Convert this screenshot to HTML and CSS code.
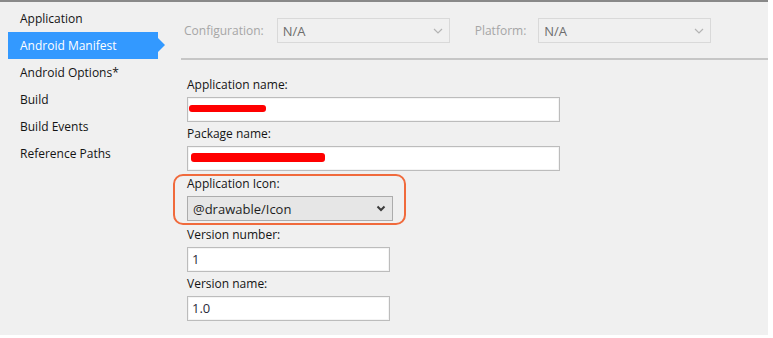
FILE: index.html
```html
<!DOCTYPE html>
<html lang="en">
<head>
    <meta charset="UTF-8">
    <title>Android Manifest</title>
    <link rel="stylesheet" href="styles.css">
</head>
<body>
    <div class="window">
        <!-- left navigation -->
        <ul class="nav">
            <li class="nav-item">Application</li>
            <li class="nav-item active">Android Manifest</li>
            <li class="nav-item">Android Options*</li>
            <li class="nav-item">Build</li>
            <li class="nav-item">Build Events</li>
            <li class="nav-item">Reference Paths</li>
        </ul>

        <div class="main">
            <!-- configuration bar -->
            <div class="toolbar">
                <span class="tool-label">Configuration:</span>
                <div class="combo disabled">
                    <span>N/A</span>
                    <svg class="chev" width="10" height="6" viewBox="0 0 10 6"><polyline points="1,1 5,5 9,1" fill="none" stroke="#b4b4b4" stroke-width="1.2"/></svg>
                </div>
                <span class="tool-label platform">Platform:</span>
                <div class="combo disabled">
                    <span>N/A</span>
                    <svg class="chev" width="10" height="6" viewBox="0 0 10 6"><polyline points="1,1 5,5 9,1" fill="none" stroke="#b4b4b4" stroke-width="1.2"/></svg>
                </div>
            </div>

            <!-- manifest form -->
            <div class="form">
                <div class="field">
                    <label>Application name:</label>
                    <div class="input wide"><span class="redact r1"></span></div>
                </div>
                <div class="field">
                    <label>Package name:</label>
                    <div class="input wide"><span class="redact r2"></span></div>
                </div>
                <div class="field highlight">
                    <label>Application Icon:</label>
                    <div class="combo icon-select">
                        <span>@drawable/Icon</span>
                        <svg class="chev" width="10" height="7" viewBox="0 0 10 7"><polyline points="1.5,1.5 5,5 8.5,1.5" fill="none" stroke="#3c3c3c" stroke-width="2"/></svg>
                    </div>
                </div>
                <div class="field">
                    <label>Version number:</label>
                    <div class="input short">1</div>
                </div>
                <div class="field">
                    <label>Version name:</label>
                    <div class="input short">1.0</div>
                </div>
            </div>
        </div>
    </div>
</body>
</html>
```

FILE: styles.css
```css
/* page */
body {
    margin: 0;
    background: #fff;
    font-family: "Segoe UI", "Open Sans", sans-serif;
    font-size: 12px;
    color: #141414;
}

.window {
    width: 768px;
    height: 333px;
    background: #f0f0f0;
    border-top: 2px solid #898989;
    display: flex;
}

/* navigation */
.nav {
    list-style: none;
    margin: 0;
    padding: 4px 0 0 8px;
    width: 173px;
    box-sizing: border-box;
}
.nav-item {
    height: 27px;
    line-height: 26px;
    padding-left: 12px;
    width: 150px;
    box-sizing: border-box;
}
.nav-item.active {
    position: relative;
    background: #3399ff;
    color: #fff;
    margin-top: -1px;
    margin-bottom: 1px;
    line-height: 28px;
}
.nav-item.active::after {
    content: "";
    position: absolute;
    right: -7px;
    top: 6px;
    border-left: 7px solid #3399ff;
    border-top: 7px solid transparent;
    border-bottom: 7px solid transparent;
}

/* main column */
.main {
    flex: 1;
    padding-left: 8px;
}

.toolbar {
    display: flex;
    align-items: center;
    padding: 16px 0 15px 3px;
    border-bottom: 2px solid #c6c6c6;
}
.tool-label {
    color: #a6a6a6;
    margin-right: 13px;
}
.tool-label.platform {
    margin-left: 25px;
    margin-right: 12px;
}

.combo {
    display: flex;
    align-items: center;
    justify-content: space-between;
    box-sizing: border-box;
    height: 25px;
    padding: 0 6px 0 5px;
    border: 1px solid #d9d9d9;
}
.combo.disabled {
    width: 173px;
    color: #6d6d6d;
    font-size: 13px;
}

/* form */
.form {
    padding: 17px 0 0 6px;
}
.field label {
    display: block;
    height: 16px;
    line-height: 16px;
    margin-bottom: 4px;
}
.field {
    margin-bottom: 4px;
}
.field.highlight {
    position: relative;
    margin: 5px 0 6px;
}
.field.highlight::after {
    content: "";
    position: absolute;
    left: -14px;
    top: -2px;
    width: 233px;
    height: 51px;
    box-sizing: border-box;
    border: 2px solid #f06a3c;
    border-radius: 10px;
}

.input {
    box-sizing: border-box;
    height: 25px;
    background: #fff;
    border: 1px solid #bcbcbc;
    box-shadow: inset 0 0 0 1px #f4f4f4;
    padding: 0 4px;
    line-height: 23px;
    font-size: 13px;
    color: #2a2a3a;
}
.input.wide { width: 373px; }
.input.short { width: 203px; }

.icon-select {
    width: 206px;
    background: #e6e6e6;
    border: 1px solid #acacac;
    font-size: 13px;
    color: #1e1e1e;
    padding-right: 6px;
}

/* redacted values */
.redact {
    display: inline-block;
    background: #ff0000;
    border-radius: 3px;
    vertical-align: top;
}
.redact.r1 {
    width: 77px;
    height: 7px;
    margin-top: 7px;
    margin-left: -3px;
}
.redact.r2 {
    width: 134px;
    height: 9px;
    margin-top: 6px;
    margin-left: -1px;
}
```
